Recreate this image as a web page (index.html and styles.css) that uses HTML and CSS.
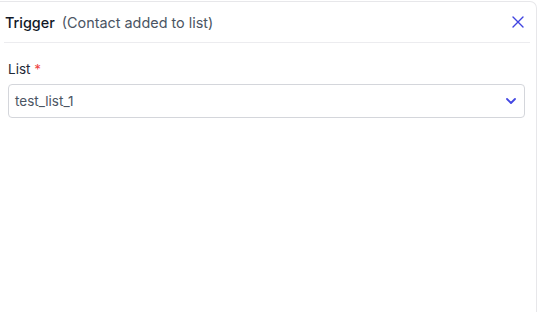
FILE: index.html
```html
<!DOCTYPE html>
<html>
<head>
<meta charset="utf-8">
<link rel="stylesheet" href="styles.css">
</head>
<body>
<div class="panel">
  <div class="header">
    <div class="title"><span class="title-main">Trigger</span><span class="title-sub">(Contact added to list)</span></div>
    <button class="close" aria-label="Close">
      <svg width="12" height="12" viewBox="0 0 12 12"><path d="M1 1 L11 11 M11 1 L1 11" stroke="#3f43e0" stroke-width="1.4" fill="none" stroke-linecap="round"/></svg>
    </button>
  </div>
  <div class="body">
    <label class="label">List <span class="req">*</span></label>
    <div class="select">
      <span class="value">test_list_1</span>
      <svg class="chev" width="10" height="6" viewBox="0 0 10 6"><path d="M1 1 L5 5 L9 1" stroke="#4347e3" stroke-width="1.8" fill="none" stroke-linecap="round" stroke-linejoin="round"/></svg>
    </div>
  </div>
</div>
</body>
</html>
```
FILE: styles.css
```css
html, body {
  margin: 0;
  padding: 0;
  background: #ffffff;
  font-family: Inter, "Noto Sans", sans-serif;
  overflow: hidden;
}
.panel {
  margin-top: 1px;
  width: 537px;
  height: 311px;
  box-sizing: border-box;
  border-top: 1px solid #e7e7ea;
  border-right: 1px solid #e7e7ea;
  border-top-right-radius: 7px;
}
.header {
  margin: 0 6px 0 4px;
  height: 40px;
  border-bottom: 1px solid #ececef;
  display: flex;
  align-items: center;
  justify-content: space-between;
  padding: 0 6px 0 1px;
}
.title {
  font-size: 14.4px;
  color: #111827;
  padding-top: 1px;
}
.title-main {
  font-weight: 500;
  margin-right: 7px;
}
.title-sub {
  color: #4b5563;
}
.close {
  border: 0;
  background: none;
  padding: 0;
  width: 12px;
  height: 12px;
  display: flex;
  cursor: pointer;
}
.body {
  padding: 17px 11px 0 8px;
  display: flex;
  flex-direction: column;
}
.label {
  font-size: 13.5px;
  color: #1f2937;
  line-height: 18px;
  margin-bottom: 6px;
}
.req {
  color: #ef4444;
}
.select {
  height: 34px;
  box-sizing: border-box;
  border: 1px solid #d4d6db;
  border-radius: 4px;
  display: flex;
  align-items: center;
  justify-content: space-between;
  padding: 0 8px 0 6px;
}
.value {
  font-size: 13.5px;
  color: #4b5563;
}
.chev {
  display: block;
}
```
